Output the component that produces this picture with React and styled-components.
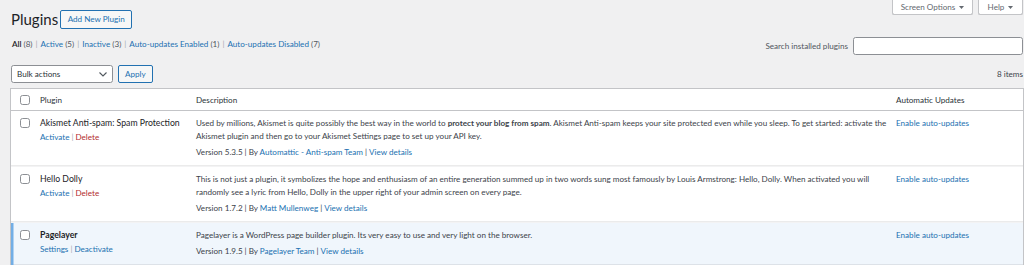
import React from 'react';
import styled, { createGlobalStyle } from 'styled-components';

const FONT = `"Segoe UI", Lato, "Liberation Sans", sans-serif`;
const FS = '8.1px';

const Global = createGlobalStyle`
  html, body { margin: 0; padding: 0; background: #f0f0f1; }
  body { font-family: ${FONT}; font-size: ${FS}; color: #3c434a; line-height: 13px; }
  * { box-sizing: border-box; }
`;

const Wrap = styled.div`
  padding: 0 0 0 10px;
`;

const ScreenMeta = styled.div`
  float: right;
  display: flex;
  gap: 5px;
  margin-right: 1px;
`;

const MetaTab = styled.button`
  width: ${(p) => p.$w}px;
  height: 15px;
  display: flex;
  align-items: center;
  justify-content: center;
  gap: 4px;
  padding: 0;
  background: #fff;
  border: 1px solid #c3c4c7;
  border-top: none;
  border-radius: 0 0 2.6px 2.6px;
  color: #646970;
  font-family: ${FONT};
  font-size: ${FS};
  line-height: 13px;
`;

const Caret = () => (
  <svg width="5" height="3" viewBox="0 0 5 3">
    <path d="M0 0h5L2.5 3z" fill="#646970" />
  </svg>
);

const Header = styled.div`
  display: flex;
  align-items: center;
  gap: 2px;
  padding-top: 10px;
`;

const Title = styled.h1`
  margin: 0 0 0 1px;
  font-size: 15px;
  font-weight: 400;
  line-height: 19px;
  color: #1d2327;
`;

const OutlineButton = styled.button`
  height: ${(p) => p.$h || 19}px;
  padding: 0 ${(p) => p.$px || 6.5}px;
  border: 1px solid #2271b1;
  border-radius: 2px;
  background: #f6f7f7;
  color: #2271b1;
  font-family: ${FONT};
  font-size: ${FS};
  line-height: 13px;
`;

const FilterRow = styled.div`
  display: flex;
  justify-content: space-between;
  align-items: flex-start;
  margin-top: 8px;
`;

const Filters = styled.ul`
  list-style: none;
  margin: 1px 0 0 2px;
  padding: 0;
  display: flex;
  color: #646970;
`;

const FilterItem = styled.li`
  white-space: pre;
`;

const FilterLink = styled.a`
  color: ${(p) => (p.$current ? '#1d2327' : '#2271b1')};
  font-weight: ${(p) => (p.$current ? 600 : 400)};
  text-decoration: none;
`;

const Count = styled.span`
  color: #50575e;
  font-weight: 400;
`;

const Sep = styled.span`
  color: #a7aaad;
  margin: 0 ${(p) => p.$m ?? 3}px;
`;

const SearchBox = styled.div`
  display: flex;
  align-items: center;
  gap: 5px;
  margin-right: 1px;
`;

const SearchLabel = styled.label`
  color: #50575e;
`;

const SearchInput = styled.input`
  width: 170px;
  height: 18px;
  border: 1px solid #8c8f94;
  border-radius: 2.6px;
  background: #fff;
  margin: 0;
`;

const TableNav = styled.div`
  display: flex;
  align-items: center;
  gap: 5px;
  margin-top: 10px;
  margin-bottom: 5px;
`;

const Select = styled.div`
  width: 102px;
  height: 18px;
  margin-left: 1px;
  display: flex;
  align-items: center;
  justify-content: space-between;
  padding: 0 5px 0 5px;
  border: 1px solid #8c8f94;
  border-radius: 2.6px;
  background: #fff;
  color: #2c3338;
`;

const Items = styled.span`
  margin-left: auto;
  margin-right: 1px;
  color: #3c434a;
`;

const Table = styled.table`
  width: 100%;
  table-layout: fixed;
  border-collapse: separate;
  border-spacing: 0;
  background: #fff;
  border: 1px solid #c3c4c7;
`;

const Col = styled.col`
  width: ${(p) => (p.$w ? `${p.$w}px` : 'auto')};
`;

const HeadCell = styled.th`
  padding: 4.5px 6px;
  line-height: 12px;
  text-align: left;
  font-weight: 400;
  color: #2c3338;
  border-bottom: 1px solid #c3c4c7;
  vertical-align: middle;
`;

const HeadCheck = styled(HeadCell)`
  padding: 0 0 0 9px;
`;

const Cell = styled.td`
  padding: 6px ${(p) => p.$pr ?? 6}px 7px 6px;
  vertical-align: top;
  background: ${(p) => (p.$active ? '#f0f6fc' : '#fff')};
  box-shadow: inset 0 -1px 0 rgba(0, 0, 0, 0.08);
  border-top: ${(p) => (p.$first ? 'none' : '1px solid #f3f3f4')};
`;

const CheckCell = styled(Cell)`
  padding: 7px 0 0 9px;
  box-shadow: ${(p) =>
    p.$active
      ? 'inset 2.5px 0 0 #72aee6, inset 0 -1px 0 rgba(0,0,0,0.08)'
      : 'inset 0 -1px 0 rgba(0,0,0,0.08)'};
`;

const Check = styled.input.attrs({ type: 'checkbox' })`
  appearance: none;
  display: block;
  width: 10px;
  height: 10px;
  margin: 0;
  border: 1px solid #8c8f94;
  border-radius: 2.6px;
  background: #fff;
`;

const Name = styled.strong`
  display: block;
  font-size: 8.7px;
  line-height: 12px;
  font-weight: ${(p) => (p.$active ? 700 : 400)};
  color: #1d2327;
  white-space: nowrap;
`;

const Actions = styled.div`
  margin-top: 2px;
  line-height: 12px;
`;

const Link = styled.a`
  color: ${(p) => (p.$danger ? '#b32d2e' : '#2271b1')};
  text-decoration: none;
`;

const Desc = styled.p`
  margin: 0;
  line-height: 13px;
`;

const Bold = styled.b`
  font-weight: 700;
`;

const Version = styled.div`
  margin-top: 3px;
  line-height: 13px;
`;

const VSep = styled.span`
  margin: 0 2px;
  color: #3c434a;
`;

const plugins = [
  {
    name: 'Akismet Anti-spam: Spam Protection',
    active: false,
    actions: [['Activate'], ['Delete', true]],
    desc: (
      <>
        Used by millions, Akismet is quite possibly the best way in the world to{' '}
        <Bold>protect your blog from spam</Bold>. Akismet Anti-spam keeps your site protected
        even while you sleep. To get started: activate the Akismet plugin and then go to your
        Akismet Settings page to set up your API key.
      </>
    ),
    version: '5.3.5',
    author: 'Automattic - Anti-spam Team',
  },
  {
    name: 'Hello Dolly',
    active: false,
    actions: [['Activate'], ['Delete', true]],
    desc: (
      <>
        This is not just a plugin, it symbolizes the hope and enthusiasm of an entire generation
        summed up in two words sung most famously by Louis Armstrong: Hello, Dolly. When
        activated you will randomly see a lyric from Hello, Dolly in the upper right of your
        admin screen on every page.
      </>
    ),
    version: '1.7.2',
    author: 'Matt Mullenweg',
  },
  {
    name: 'Pagelayer',
    active: true,
    actions: [['Settings'], ['Deactivate']],
    desc: <>Pagelayer is a WordPress page builder plugin. Its very easy to use and very light on the browser.</>,
    version: '1.9.5',
    author: 'Pagelayer Team',
  },
];

export default function App() {
  return (
    <>
      <Global />
      <Wrap>
        <ScreenMeta>
          <MetaTab $w={81}>
            Screen Options <Caret />
          </MetaTab>
          <MetaTab $w={45}>
            Help <Caret />
          </MetaTab>
        </ScreenMeta>
        <Header>
          <Title>Plugins</Title>
          <OutlineButton>Add New Plugin</OutlineButton>
        </Header>
        <FilterRow>
          <Filters>
            <FilterItem>
              <FilterLink $current>
                All <Count>(8)</Count>
              </FilterLink>
              <Sep>|</Sep>
            </FilterItem>
            <FilterItem>
              <FilterLink>
                Active <Count>(5)</Count>
              </FilterLink>
              <Sep>|</Sep>
            </FilterItem>
            <FilterItem>
              <FilterLink>
                Inactive <Count>(3)</Count>
              </FilterLink>
              <Sep>|</Sep>
            </FilterItem>
            <FilterItem>
              <FilterLink>
                Auto-updates Enabled <Count>(1)</Count>
              </FilterLink>
              <Sep>|</Sep>
            </FilterItem>
            <FilterItem>
              <FilterLink>
                Auto-updates Disabled <Count>(7)</Count>
              </FilterLink>
            </FilterItem>
          </Filters>
          <SearchBox>
            <SearchLabel>Search installed plugins</SearchLabel>
            <SearchInput />
          </SearchBox>
        </FilterRow>
        <TableNav>
          <Select>
            Bulk actions
            <svg width="8" height="5" viewBox="0 0 8 5">
              <path d="M0.5 0.5L4 4L7.5 0.5" fill="none" stroke="#50575e" strokeWidth="1.1" />
            </svg>
          </Select>
          <OutlineButton $h={18} $px={6}>Apply</OutlineButton>
          <Items>8 items</Items>
        </TableNav>
        <Table>
          <colgroup>
            <Col $w={23} />
            <Col $w={156} />
            <Col $w={700} />
            <Col />
          </colgroup>
          <thead>
            <tr>
              <HeadCheck>
                <Check />
              </HeadCheck>
              <HeadCell>Plugin</HeadCell>
              <HeadCell>Description</HeadCell>
              <HeadCell>Automatic Updates</HeadCell>
            </tr>
          </thead>
          <tbody>
            {plugins.map((p, i) => (
              <tr key={p.name}>
                <CheckCell $active={p.active} $first={i === 0}>
                  <Check />
                </CheckCell>
                <Cell $active={p.active} $first={i === 0}>
                  <Name $active={p.active}>{p.name}</Name>
                  <Actions>
                    {p.actions.map(([label, danger], j) => (
                      <React.Fragment key={label}>
                        {j > 0 && <Sep $m={2}>|</Sep>}
                        <Link $danger={danger}>{label}</Link>
                      </React.Fragment>
                    ))}
                  </Actions>
                </Cell>
                <Cell $active={p.active} $first={i === 0} $pr={0}>
                  <Desc>{p.desc}</Desc>
                  <Version>
                    Version {p.version}
                    <VSep>|</VSep>By <Link>{p.author}</Link>
                    <VSep>|</VSep>
                    <Link>View details</Link>
                  </Version>
                </Cell>
                <Cell $active={p.active} $first={i === 0}>
                  <Link>Enable auto-updates</Link>
                </Cell>
              </tr>
            ))}
          </tbody>
        </Table>
      </Wrap>
    </>
  );
}
